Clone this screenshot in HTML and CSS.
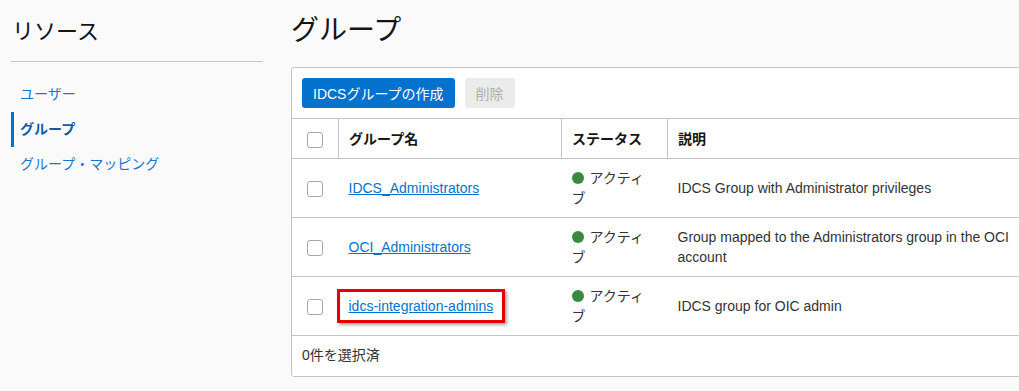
FILE: index.html
```html
<!DOCTYPE html>
<html lang="ja">
<head>
    <meta charset="UTF-8">
    <meta name="viewport" content="width=device-width, initial-scale=1.0">
    <title>グループ</title>
    <link rel="stylesheet" href="styles.css">
</head>
<body>
    <div class="page">
        <aside class="sidebar">
            <h2>リソース</h2>
            <nav class="nav">
                <a href="#">ユーザー</a>
                <a href="#" class="active">グループ</a>
                <a href="#">グループ・マッピング</a>
            </nav>
        </aside>

        <main class="main">
            <h1>グループ</h1>
            <div class="panel">
                <div class="toolbar">
                    <button class="btn primary">IDCSグループの作成</button>
                    <button class="btn disabled">削除</button>
                </div>
                <table class="groups">
                    <thead>
                        <tr>
                            <th class="col-check"><span class="check"></span></th>
                            <th class="col-name">グループ名</th>
                            <th class="col-status">ステータス</th>
                            <th class="col-desc">説明</th>
                        </tr>
                    </thead>
                    <tbody>
                        <tr>
                            <td class="col-check"><span class="check"></span></td>
                            <td><a href="#">IDCS_Administrators</a></td>
                            <td class="status"><span class="dot"></span>アクティブ</td>
                            <td>IDCS Group with Administrator privileges</td>
                        </tr>
                        <tr>
                            <td class="col-check"><span class="check"></span></td>
                            <td><a href="#">OCI_Administrators</a></td>
                            <td class="status"><span class="dot"></span>アクティブ</td>
                            <td>Group mapped to the Administrators group in the OCI account</td>
                        </tr>
                        <tr>
                            <td class="col-check"><span class="check"></span></td>
                            <td><a href="#" class="mark">idcs-integration-admins</a></td>
                            <td class="status"><span class="dot"></span>アクティブ</td>
                            <td>IDCS group for OIC admin</td>
                        </tr>
                    </tbody>
                </table>
                <div class="footer">0件を選択済</div>
            </div>
        </main>
    </div>
</body>
</html>
```

FILE: styles.css
```css
body {
    font-family: "Liberation Sans", "Noto Sans CJK JP", sans-serif;
    font-size: 14px;
    margin: 0;
    padding: 0;
    background: #fafafa;
    color: #161513;
    overflow: hidden;
}
.page {
    display: flex;
    gap: 28px;
    padding-left: 11px;
}
.sidebar {
    width: 252px;
    flex-shrink: 0;
}
.sidebar h2 {
    font-size: 22px;
    font-weight: normal;
    margin: 0;
    padding: 18px 0 0 1px;
    height: 43px;
    line-height: 28px;
    border-bottom: 1px solid #c6c6c6;
}
.nav {
    display: flex;
    flex-direction: column;
    padding-top: 15px;
}
.nav a {
    display: block;
    height: 35px;
    line-height: 35px;
    padding-left: 6px;
    border-left: 3px solid transparent;
    color: #1b74d0;
    text-decoration: none;
}
.nav a.active {
    border-left-color: #0572ce;
    color: #1459a8;
    font-weight: bold;
}
.main {
    flex-shrink: 0;
}
.main h1 {
    font-size: 28px;
    font-weight: normal;
    margin: 0;
    padding-top: 12px;
    height: 67px;
    line-height: 38px;
    box-sizing: border-box;
}
.panel {
    width: 760px;
    background: white;
    border: 1px solid #c1c5ca;
    border-radius: 3px;
}
.toolbar {
    display: flex;
    gap: 10px;
    padding: 10px;
}
.btn {
    font-family: inherit;
    font-size: 14px;
    height: 30px;
    padding: 0 11px;
    border: none;
    border-radius: 3px;
}
.btn.primary {
    background: #0572ce;
    color: white;
}
.btn.disabled {
    background: #ebebeb;
    color: #b0b0b0;
}
.groups {
    width: 100%;
    border-collapse: collapse;
    table-layout: fixed;
}
.groups th, .groups td {
    text-align: left;
    vertical-align: middle;
    padding: 0 10px;
    border-top: 1px solid #c1c5ca;
    line-height: 20px;
}
.groups th {
    height: 39px;
    font-weight: bold;
    border-right: 1px solid #c1c5ca;
}
.groups th:last-child {
    border-right: none;
}
.groups td {
    height: 58px;
    color: #333;
}
.col-check {
    width: 26px;
    text-align: center !important;
}
.col-name {
    width: 202px;
}
.col-status {
    width: 85px;
}
.check {
    display: inline-block;
    width: 14px;
    height: 14px;
    border: 1px solid #a8a8a8;
    border-radius: 3px;
    background: white;
    vertical-align: middle;
}
.groups a {
    color: #0572ce;
    text-decoration: underline;
}
.status .dot {
    display: inline-block;
    width: 12px;
    height: 12px;
    border-radius: 50%;
    background: #3a8a3d;
    margin-right: 6px;
    vertical-align: -1px;
}
.mark {
    position: relative;
}
.mark::after {
    content: "";
    position: absolute;
    top: -9px;
    bottom: -9px;
    left: -12px;
    right: -12px;
    border: 3px solid #e80000;
    box-shadow: 2px 2px 3px rgba(0, 0, 0, 0.35);
}
.footer {
    border-top: 1px solid #c1c5ca;
    height: 40px;
    line-height: 38px;
    padding-left: 10px;
    color: #333;
}
```
